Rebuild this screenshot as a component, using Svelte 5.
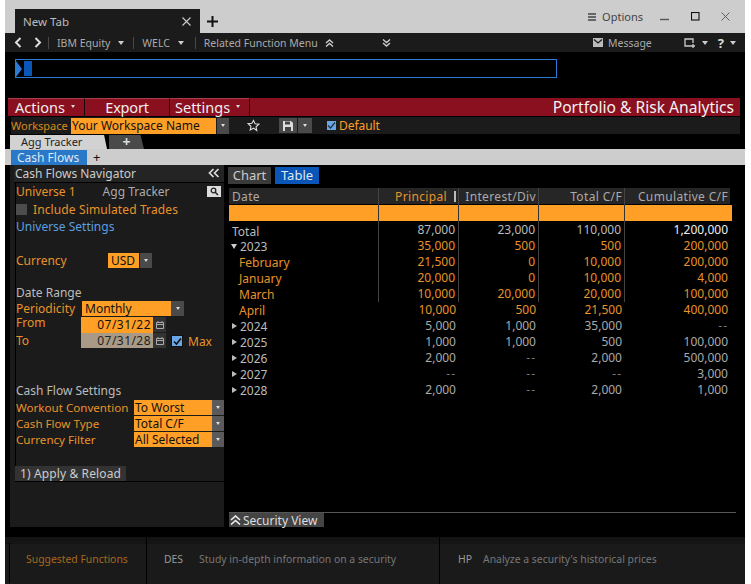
<script>
  const rows = [
    { d: 'Total', t: '', c: ['87,000', '23,000', '110,000', '1,200,000'], k: 'total', line: true },
    { d: '2023', t: 'down', c: ['35,000', '500', '500', '200,000'], k: 'org', line: true },
    { d: 'February', t: '', c: ['21,500', '0', '10,000', '200,000'], k: 'org sub', line: true },
    { d: 'January', t: '', c: ['20,000', '0', '10,000', '4,000'], k: 'org sub', line: true },
    { d: 'March', t: '', c: ['10,000', '20,000', '20,000', '100,000'], k: 'org sub', line: true },
    { d: 'April', t: '', c: ['10,000', '500', '21,500', '400,000'], k: 'org sub', line: false },
    { d: '2024', t: 'right', c: ['5,000', '1,000', '35,000', '--'], k: 'gry', line: false },
    { d: '2025', t: 'right', c: ['1,000', '1,000', '500', '100,000'], k: 'gry', line: false },
    { d: '2026', t: 'right', c: ['2,000', '--', '2,000', '500,000'], k: 'gry', line: false },
    { d: '2027', t: 'right', c: ['--', '--', '--', '3,000'], k: 'gry', line: false },
    { d: '2028', t: 'right', c: ['2,000', '--', '2,000', '1,000'], k: 'gry', line: false }
  ];
</script>

<div class="win">
  <header class="titlebar">
    <div class="tab"><span>New Tab</span>
      <svg width="11" height="11" viewBox="0 0 11 11"><path d="M1.500 1.500l8 8M9.500 1.500l-8 8" stroke="#ccc" stroke-width="1.100"/></svg>
    </div>
    <svg class="plus" width="11" height="11" viewBox="0 0 11 11"><path d="M5.500 0v11M0 5.500h11" stroke="#111" stroke-width="2"/></svg>
    <div class="grow"></div>
    <svg width="8" height="8" viewBox="0 0 8 8"><path d="M0 1h8M0 4h8M0 7h8" stroke="#444" stroke-width="1.600"/></svg>
    <span class="options">Options</span>
    <div class="wbtns">
      <svg class="wmin" width="9" height="9" viewBox="0 0 9 9"><path d="M0 7.500h9" stroke="#555" stroke-width="1.400"/></svg>
      <svg width="9" height="9" viewBox="0 0 9 9"><rect x=".5" y=".5" width="7.500" height="7.500" fill="none" stroke="#111" stroke-width="1.100"/></svg>
      <svg width="9" height="9" viewBox="0 0 9 9"><path d="M.5.5l8 8M8.500.5l-8 8" stroke="#555" stroke-width=".9"/></svg>
    </div>
  </header>

  <nav class="toolbar">
    <svg class="chev" width="8" height="11" viewBox="0 0 8 11"><path d="M6.500 1L2 5.500 6.500 10" fill="none" stroke="#ddd" stroke-width="2"/></svg>
    <svg class="chev r2" width="8" height="11" viewBox="0 0 8 11"><path d="M1.500 1L6 5.500 1.500 10" fill="none" stroke="#ddd" stroke-width="2"/></svg>
    <i class="sep"></i><span class="tb-item">IBM Equity</span><i class="caret"></i>
    <i class="sep"></i><span class="tb-item">WELC</span><i class="caret c1"></i>
    <i class="sep"></i><span class="tb-item">Related Function Menu</span>
    <svg class="dbl" width="9" height="8" viewBox="0 0 9 8"><path d="M1 4l3.500-3L8 4M1 7.500l3.500-3 3.500 3" fill="none" stroke="#ccc" stroke-width="1.400"/></svg>
    <svg class="dbl2" width="9" height="8" viewBox="0 0 9 8"><path d="M1 .5l3.500 3 3.500-3M1 4l3.500 3L8 4" fill="none" stroke="#ccc" stroke-width="1.400"/></svg>
    <div class="grow"></div>
    <svg width="10" height="9" viewBox="0 0 10 9"><rect width="10" height="9" fill="#bbb"/><path d="M1 1.500l4 3.500 4-3.500" fill="none" stroke="#1b1b1b" stroke-width="1.200"/></svg>
    <span class="msg">Message</span>
    <svg class="scr" width="12" height="10" viewBox="0 0 12 10"><path d="M7 8H1V1h8v4M9 6v4M7 8h4" fill="none" stroke="#ccc" stroke-width="1.300"/></svg>
    <i class="caret c2"></i>
    <span class="q">?</span>
    <i class="caret c3"></i>
  </nav>

  <section class="cmd">
    <div class="cmdbox"><i class="prompt"></i><i class="cursor"></i></div>
  </section>

  <section class="redbar">
    <button class="rb w1">Actions<i class="tiny"></i></button>
    <button class="rb w2">Export</button>
    <button class="rb w3">Settings<i class="tiny"></i></button>
    <div class="grow"></div>
    <span class="brand">Portfolio &amp; Risk Analytics</span>
  </section>

  <section class="wsbar">
    <span class="wslabel">Workspace</span>
    <div class="wsname">Your Workspace Name</div>
    <span class="dd wsdd"><i class="tiny"></i></span>
    <svg class="star" width="13" height="13" viewBox="0 0 24 24"><path d="M12 2.500l2.900 6.400 7 .8-5.200 4.700 1.400 6.900L12 16.900l-6.100 3.400 1.400-6.900-5.200-4.700 7-.8z" fill="none" stroke="#ddd" stroke-width="2"/></svg>
    <span class="dd save"><svg width="10" height="10" viewBox="0 0 10 10"><path d="M0 0h8l2 2v8H0z" fill="#ddd"/><rect x="2" y="0.500" width="5" height="3" fill="#444"/><rect x="2" y="6" width="6" height="4" fill="#444"/></svg></span>
    <span class="dd savedd"><i class="tiny"></i></span>
    <span class="cb blue"><svg width="9" height="9" viewBox="0 0 9 9"><path d="M1 4.500l2.500 2.500L8 1.500" fill="none" stroke="#234" stroke-width="1.300"/></svg></span>
    <span class="deflabel">Default</span>
  </section>

  <section class="tabs1">
    <div class="t-active">Agg Tracker</div>
    <div class="t-add">+</div>
  </section>
  <section class="tabs2">
    <div class="t2">Cash Flows</div>
    <span class="t2plus">+</span>
  </section>

  <main class="body">
    <aside class="nav">
      <div class="navhead"><span>Cash Flows Navigator</span>
        <svg width="12" height="10" viewBox="0 0 12 10"><path d="M5.500 1L1.500 5l4 4M10.500 1l-4 4 4 4" fill="none" stroke="#ddd" stroke-width="1.700"/></svg>
      </div>
      <div class="navrows">
        <div class="r univ"><span class="o">Universe 1</span><span class="at">Agg Tracker</span>
          <span class="search"><svg width="9" height="9" viewBox="0 0 9 9"><circle cx="3.500" cy="3.500" r="2.300" fill="none" stroke="#222" stroke-width="1.300"/><path d="M5 5l3 3" stroke="#222" stroke-width="1.500"/></svg></span>
        </div>
        <div class="r sim"><span class="gbox"></span><span class="o">Include Simulated Trades</span></div>
        <div class="r link">Universe Settings</div>
        <div class="r cur"><span class="o lab">Currency</span><span class="inp usd">USD</span><span class="dd usddd"><i class="tiny"></i></span></div>
        <div class="r h dr">Date Range</div>
        <div class="r per"><span class="o lab">Periodicity</span><span class="inp mon">Monthly</span><span class="dd mondd"><i class="tiny"></i></span></div>
        <div class="r from"><span class="o lab">From</span><span class="inp dt">07/31/22</span><span class="cal"><svg width="8" height="8" viewBox="0 0 8 8"><path d="M.5 1.500h7v6h-7zM.5 3.500h7M2 0v2M6 0v2" fill="none" stroke="#aaa"/></svg></span></div>
        <div class="r to"><span class="o lab">To</span><span class="inp dt dis">07/31/28</span><span class="cal"><svg width="8" height="8" viewBox="0 0 8 8"><path d="M.5 1.500h7v6h-7zM.5 3.500h7M2 0v2M6 0v2" fill="none" stroke="#aaa"/></svg></span>
          <span class="cb mx"><svg width="9" height="9" viewBox="0 0 9 9"><path d="M1 4.500l2.500 2.500L8 1.500" fill="none" stroke="#111" stroke-width="1.600"/></svg></span><span class="o">Max</span></div>
        <div class="r h cfs">Cash Flow Settings</div>
        <div class="r sel"><span class="o slab">Workout Convention</span><span class="inp sv">To Worst</span><span class="dd sdd"><i class="tiny"></i></span></div>
        <div class="r sel"><span class="o slab">Cash Flow Type</span><span class="inp sv">Total C/F</span><span class="dd sdd"><i class="tiny"></i></span></div>
        <div class="r sel"><span class="o slab">Currency Filter</span><span class="inp sv">All Selected</span><span class="dd sdd"><i class="tiny"></i></span></div>
      </div>
      <div class="apply"><span>1) Apply &amp; Reload</span></div>
    </aside>

    <div class="content">
      <div class="seg"><button class="sb">Chart</button><button class="sb on">Table</button></div>
      <div class="table">
        <div class="tr head">
          <div class="td date">Date</div>
          <div class="td num pr">Principal<i class="sortbar"></i></div>
          <div class="td num">Interest/Div</div>
          <div class="td num">Total C/F</div>
          <div class="td num last">Cumulative C/F</div>
        </div>
        <div class="tr filter"><div class="td date"></div><div class="td num"></div><div class="td num"></div><div class="td num"></div><div class="td num last"></div></div>
        <div class="tr spacer lined"><div class="td date"></div><div class="td num"></div><div class="td num"></div><div class="td num"></div><div class="td num last"></div></div>
        {#each rows as r}
          <div class="tr row {r.k}" class:lined={r.line}>
            <div class="td date">
              {#if r.t === 'down'}<i class="tw down"></i>{:else if r.t === 'right'}<i class="tw right"></i>{/if}<span>{r.d}</span>
            </div>
            {#each r.c as v, i}
              <div class="td num" class:last={i === 3} class:dash={v === '--'} class:cumtotal={r.k === 'total' && i === 3}>{v}</div>
            {/each}
          </div>
        {/each}
      </div>
      <div class="grow"></div>
      <div class="secview">
        <span class="sv-btn"><svg width="11" height="10" viewBox="0 0 11 10"><path d="M1 5l4.500-4L10 5M1 9.500l4.500-4 4.500 4" fill="none" stroke="#eee" stroke-width="1.600"/></svg>Security View</span>
      </div>
    </div>
  </main>

  <footer class="foot">
    <div class="f f1">Suggested Functions</div>
    <div class="f f2"><b>DES</b><span>Study in-depth information on a security</span></div>
    <div class="f f3"><b>HP</b><span>Analyze a security's historical prices</span></div>
  </footer>
</div>

<style>
  :global(body) { margin: 0; background: #fff; }
  .win {
    width: 740px; height: 584px; margin-left: 5px; background: #000;
    display: flex; flex-direction: column; overflow: hidden;
    font-family: "Noto Sans", sans-serif; font-size: 12px; color: #ccc;
  }
  .grow { flex: 1; }
  i { display: block; font-style: normal; }
  button { font: inherit; border: 0; padding: 0; color: inherit; }

  .titlebar { height: 33px; background: #cdcdcd; display: flex; align-items: center; flex: none; }
  .tab { margin: 9px 0 0 10px; width: 185px; height: 24px; box-sizing: border-box; background: #1b1b1b; color: #bbb; display: flex; align-items: center; justify-content: space-between; padding: 0 8px 0 8px; font-size: 11.500px; }
  .plus { margin: 9px 0 0 7px; }
  .options { color: #444; font-size: 11px; margin: 0 17px 0 6px; }
  .wbtns { display: flex; gap: 21px; margin-right: 15px; }
  .wmin { margin-right: 1px; }

  .toolbar { height: 19px; background: #1b1b1b; display: flex; align-items: center; flex: none; color: #aaa; font-size: 10.500px; }
  .chev { margin-left: 9px; }
  .chev.r2 { margin-left: 12px; margin-right: 6px; }
  .sep { width: 1px; height: 12px; background: #4a4a4a; margin-right: 8px; }
  .caret { width: 0; height: 0; border: 3.500px solid transparent; border-top: 4px solid #ccc; border-bottom: 0; margin: 0 9px 0 8px; }
  .caret.c1 { margin-right: 11px; }
  .dbl { margin-left: 7px; }
  .dbl2 { margin-left: 48px; }
  .msg { margin: 0 32px 0 5px; }
  .caret.c2 { margin: 0 0 0 6px; }
  .q { color: #ddd; font-size: 13px; font-weight: 700; margin-left: 10px; }
  .caret.c3 { margin: 0 9px 0 6px; }

  .cmd { height: 46px; flex: none; box-sizing: border-box; padding: 7px 0 0 10px; }
  .cmdbox { width: 542px; height: 19px; box-sizing: border-box; border: 1px solid #2b7bd6; display: flex; align-items: center; }
  .prompt { width: 0; height: 0; border-left: 6px solid #2b7bd6; border-top: 8.500px solid transparent; border-bottom: 8.500px solid transparent; }
  .cursor { width: 8px; height: 15px; background: #0a56b8; margin-left: 2px; }

  .redbar { margin-left: 3px; width: 732px; height: 18px; flex: none; background: #8a1020; display: flex; color: #eee; font-size: 14.500px; line-height: 18px; box-sizing: border-box; }
  .rb { background: #8a1020; height: 18px; box-sizing: border-box; border-right: 1px solid #1b0a0a; display: flex; align-items: center; gap: 6px; padding: 0 0 2px 7px; color: #eee; font-size: 14.500px; border-top: 1px solid #a84050; }
  .rb.w1 { width: 77px; }
  .rb.w2 { width: 85px; justify-content: center; padding: 0 0 2px; letter-spacing: -.2px; }
  .rb.w3 { width: 80px; padding-left: 5px; }
  .tiny { width: 0; height: 0; border: 2.500px solid transparent; border-top: 3px solid #ddd; border-bottom: 0; }
  .brand { color: #f2f2f2; font-size: 15.600px; margin-right: 6px; }

  .wsbar { margin: 1px 0 0 6px; width: 729px; height: 17px; flex: none; background: #1b1b1b; display: flex; align-items: center; }
  .wslabel { color: #d98a1e; font-size: 11px; width: 60px; }
  .wsname { width: 145px; height: 16px; background: #ff9f26; color: #111; font-size: 12px; line-height: 16px; padding-left: 1px; box-sizing: border-box; }
  .dd { background: #4a4a4a; display: flex; align-items: center; justify-content: center; flex: none; }
  .wsdd { width: 12px; height: 16px; margin-left: 1px; }
  .star { margin-left: 18px; }
  .save { width: 18px; height: 15px; margin-left: 19px; }
  .savedd { width: 14px; height: 15px; margin-left: 1px; }
  .cb { display: flex; align-items: center; justify-content: center; flex: none; }
  .cb.blue { width: 9px; height: 9px; background: #6aa5e6; margin-left: 15px; }
  .deflabel { color: #ff9f26; font-size: 12px; margin-left: 3px; letter-spacing: -.05px; }

  .tabs1 { height: 15px; margin-left: 5px; flex: none; display: flex; align-items: flex-end; }
  .t-active { width: 97px; height: 14px; background: #d2d2d2; color: #222; font-size: 11px; line-height: 14px; padding-left: 11px; box-sizing: border-box; clip-path: polygon(0 0, 97% 0, 100% 100%, 0 100%); }
  .t-add { width: 35px; height: 14px; margin-left: 2px; background: #4a4a4a; color: #ddd; font-size: 14px; font-weight: 700; line-height: 14px; text-align: center; clip-path: polygon(0 0, 90% 0, 100% 100%, 0 100%); }

  .tabs2 { height: 16px; background: #cdcdcd; flex: none; display: flex; align-items: flex-end; padding-left: 6px; }
  .t2 { width: 76px; height: 15px; background: #2a78c8; color: #dce8f5; font-size: 12px; line-height: 15px; padding-left: 6px; box-sizing: border-box; }
  .t2plus { color: #111; font-size: 13px; line-height: 15px; margin-left: 6px; }

  .body { height: 362px; flex: none; display: flex; }
  .nav { margin-left: 5px; width: 214px; flex: none; background: #1b1b1b; box-sizing: border-box; display: flex; flex-direction: column; }
  .navhead { height: 18px; flex: none; margin-left: 4px; background: #242424; display: flex; justify-content: space-between; align-items: center; color: #ccc; font-size: 12px; padding: 0 4px 1px 1px; border-bottom: 1px solid #000; box-sizing: border-box; }
  .navrows { height: 283px; flex: none; box-sizing: border-box; margin-left: 5px; border-left: 1px solid #000; }
  .r { display: flex; align-items: center; height: 16px; box-sizing: border-box; padding-bottom: 2px; }
  .o { color: #e8932a; }
  .univ { height: 17px; padding-bottom: 0; }
  .at { margin-left: 27px; color: #aaa; }
  .search { margin-left: auto; margin-right: 3px; width: 14px; height: 11px; background: #ddd; display: flex; align-items: center; justify-content: center; }
  .sim { margin-top: 2px; letter-spacing: .12px; }
  .gbox { width: 11px; height: 11px; background: #4c4c4c; margin-right: 6px; }
  .link { color: #5a9fe0; margin-top: 1px; }
  .cur { margin-top: 18px; }
  .lab { width: 92px; flex: none; line-height: 13px; }
  .inp { background: #ff9f26; color: #111; height: 15px; line-height: 15px; box-sizing: border-box; flex: none; font-size: 12px; align-self: flex-start; }
  .dd { align-self: center; }
  .usd { width: 31px; padding-left: 3px; }
  .usddd { width: 12px; height: 15px; margin-left: 1px; align-self: flex-start; }
  .dr { margin-top: 16px; }
  .h { color: #bbb; }
  .per .lab { width: 66px; }
  .mon { width: 89px; padding-left: 3px; }
  .mondd { width: 13px; height: 15px; align-self: flex-start; }
  .from, .to { padding-bottom: 0; }
  .from .lab { width: 65px; margin-top: -6px; line-height: 11px; }
  .to .lab { width: 65px; margin-top: -2px; }
  .dt { width: 72px; height: 16px; line-height: 16px; text-align: right; padding-right: 2px; letter-spacing: .45px; }
  .dis { background: #a89a86; color: #222; height: 15px; line-height: 15px; }
  .cal { width: 13px; height: 15px; background: #333; display: flex; align-items: center; justify-content: center; align-self: flex-start; }
  .cb.mx { width: 12px; height: 12px; background: #6aa5e6; margin: 0 5px 0 5px; border: 1px solid #111; box-sizing: border-box; }
  .cfs { margin-top: 34px; }
  .cfs + .sel { margin-top: 1px; }
  .slab { width: 118px; flex: none; font-size: 11.600px; }
  .sv { width: 78px; padding-left: 1px; }
  .sdd { width: 12px; height: 15px; background: #5a5a5a; align-self: flex-start; }
  .apply { margin-left: 5px; border-bottom: 1px solid #000; height: 15px; }
  .apply span { display: block; width: 111px; height: 15px; line-height: 15px; background: #333; color: #ccc; padding-left: 5px; box-sizing: border-box; letter-spacing: .12px; }

  .content { flex: 1; display: flex; flex-direction: column; padding-left: 4px; }
  .seg { display: flex; gap: 4px; height: 17px; margin-top: 2px; flex: none; }
  .sb { width: 43px; height: 17px; background: #3a3a3a; color: #ccc; font-size: 13px; line-height: 17px; }
  .sb.on { width: 44px; background: #0a56b8; color: #dde8f5; }
  .table { margin-top: 4px; margin-left: 1px; width: 503px; }
  .tr { display: grid; grid-template-columns: 150px 80px 80px 86px 107px; }
  .td { box-sizing: border-box; white-space: nowrap; }
  .td.date { padding-left: 3px; display: flex; align-items: center; }
  .td.num { text-align: right; padding-right: 3px; }
  .td.num.last { padding-right: 4px; }
  .head { height: 17px; background: #262626; color: #aaa; line-height: 17px; border-bottom: 1px solid #000; box-sizing: border-box; font-size: 12px; letter-spacing: .35px; width: 501px; grid-template-columns: 150px 80px 80px 86px 105px; }
  .head .td.num { padding-right: 2px; }
  .head .td.num.last { padding-right: 2px; }
  .head .td, .filter .td, .lined .td { border-right: 1px solid #444; }
  .head .td.last, .filter .td.last, .lined .td.last { border-right: 0; }
  .td.num.pr { color: #e8932a; display: flex; justify-content: flex-end; align-items: center; gap: 7px; padding-right: 2px; }
  .sortbar { width: 2px; height: 11px; background: #bbb; }
  .filter { height: 16px; background: #ff9f26; }
  .filter .td { border-right-color: #333; }
  .spacer { height: 1px; }
  .row { height: 16px; line-height: 16px; font-size: 12px; }
  .row .date span { line-height: 13px; }
  .total { color: #bbb; }
  .org { color: #e8932a; }
  .total .td.date { padding-top: 2px; }
  .org .td.date { padding-top: 1px; }
  .org .date span { color: #bbb; }
  .org.sub .date span { color: #e8932a; padding-left: 7px; }
  .gry { color: #aaa; }
  .gry .date span { color: #bbb; }
  .cumtotal { color: #eee; }
  .td.dash { color: #777; letter-spacing: 1px; }
  .tw { width: 0; height: 0; margin: 0 3px 0 -1px; }
  .tw.down { border: 3px solid transparent; border-top: 5px solid #ccc; border-bottom: 0; }
  .tw.right { border: 3px solid transparent; border-left: 5px solid #bbb; border-right: 0; margin-left: 0; }

  .secview { height: 15px; margin-left: 1px; width: 507px; border-top: 1px solid #555; flex: none; box-sizing: border-box; }
  .sv-btn { display: flex; align-items: center; gap: 2px; width: 95px; height: 14px; background: #444; color: #ddd; font-size: 12px; padding-left: 1px; box-sizing: border-box; }

  .foot { height: 47px; flex: none; margin-top: 10px; background: linear-gradient(#141414 7px, #1a1a1a 7px); display: flex; font-size: 10.400px; color: #777; }
  .f { height: 47px; display: flex; align-items: center; box-sizing: border-box; padding-bottom: 3px; }
  .f1 { width: 142px; color: #a8691c; padding-left: 16px; border-right: 1px solid #000; margin-left: 0; }
  .f1::before { content: ""; width: 1px; height: 40px; background: #000; margin: 7px 16px 0 -12px; flex: none; }
  .f2 { width: 293px; padding-left: 17px; gap: 16px; border-right: 1px solid #000; }
  .f3 { padding-left: 18px; gap: 11px; }
  .f b { font-weight: 400; color: #999; }
</style>
